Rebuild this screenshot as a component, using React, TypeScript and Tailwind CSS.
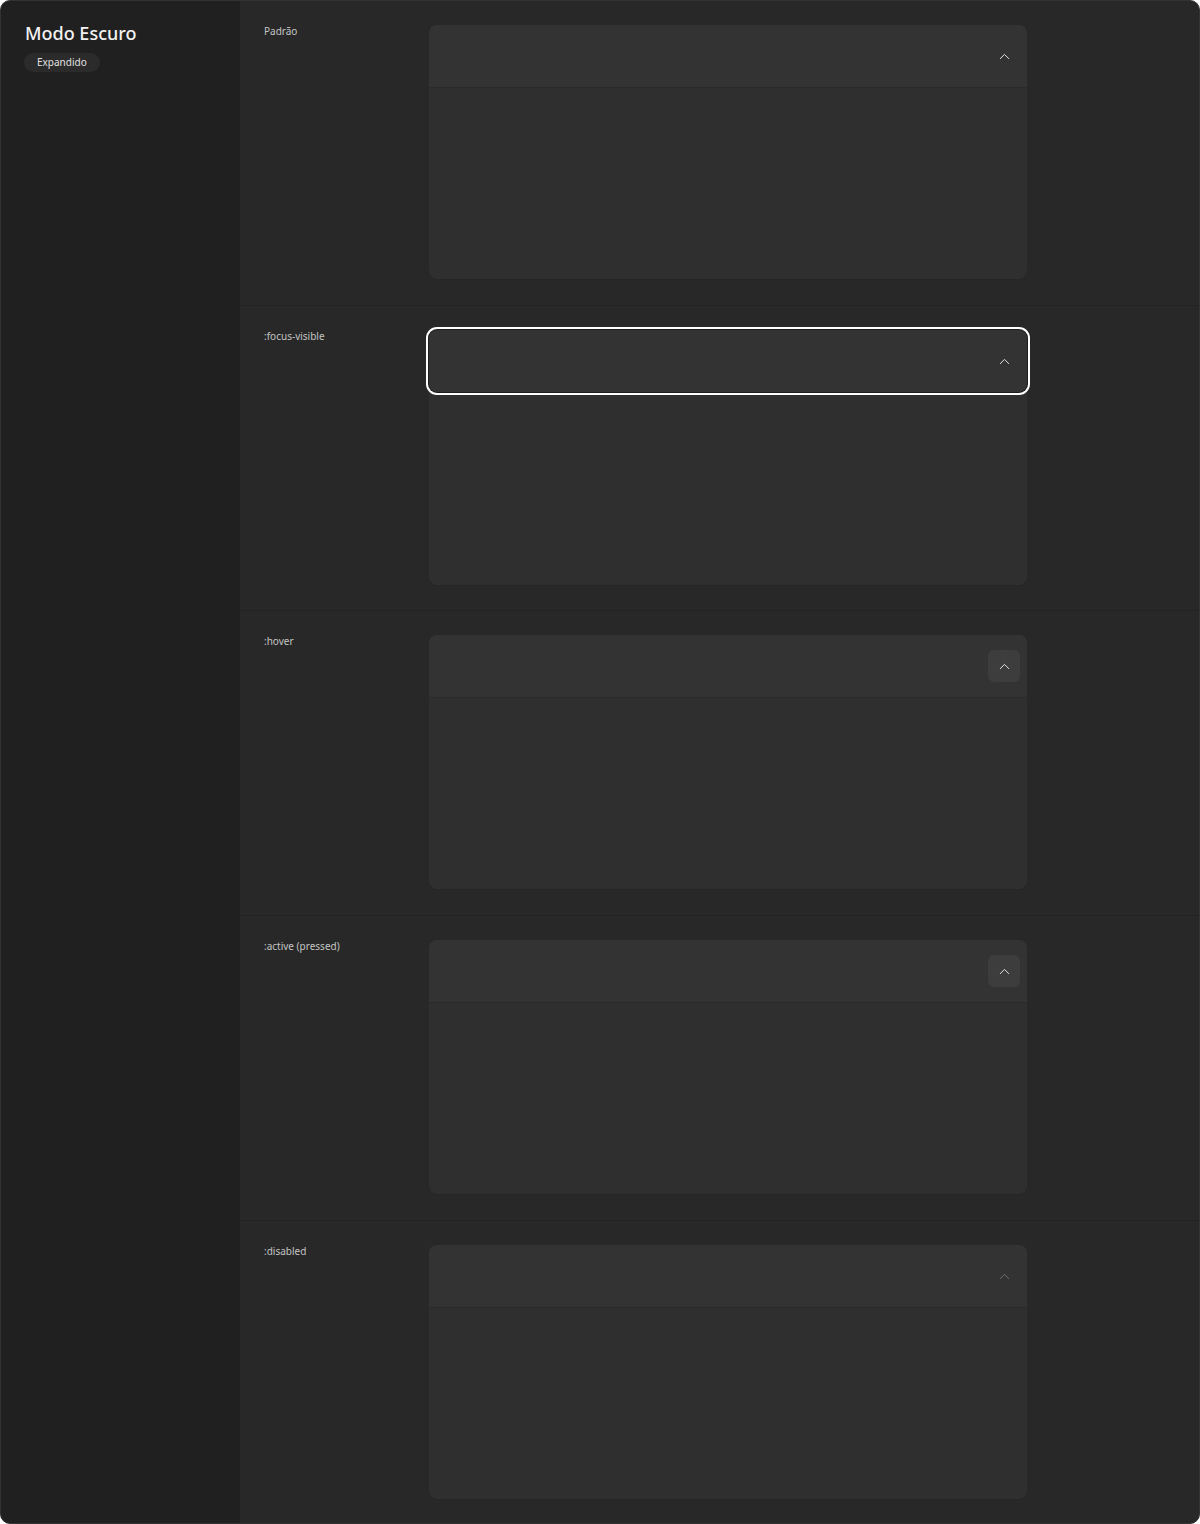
import { ChevronUp } from "lucide-react";

type State = "default" | "focus" | "hover" | "active" | "disabled";

const rows: { label: string; state: State }[] = [
  { label: "Padrão", state: "default" },
  { label: ":focus-visible", state: "focus" },
  { label: ":hover", state: "hover" },
  { label: ":active (pressed)", state: "active" },
  { label: ":disabled", state: "disabled" },
];

function Accordion({ state }: { state: State }) {
  const focus = state === "focus";
  const button = state === "hover" || state === "active";
  return (
    <div className="w-[598px] rounded-lg bg-[#2f2f2f] shadow-[0_1px_0_#262626]">
      <div
        className={`flex h-[62px] items-center justify-end rounded-t-lg bg-[#333333] pr-[7px] ${
          focus ? "rounded-b-lg shadow-[0_0_0_1px_#1c1c1c,0_0_0_3px_#ffffff]" : ""
        }`}
      >
        <div
          className={`flex h-8 w-8 items-center justify-center rounded-md ${
            button ? "bg-[#3d3d3d]" : ""
          }`}
        >
          <ChevronUp
            size={17}
            strokeWidth={1.4}
            className={state === "disabled" ? "text-[#6f6f6f]" : "text-[#e6e6e6]"}
          />
        </div>
      </div>
      <div className={`h-[192px] ${focus ? "mt-px" : "border-t border-[#2a2a2a]"}`} />
    </div>
  );
}

export default function App() {
  return (
    <div
      className="flex h-[1524px] w-[1200px] overflow-hidden rounded-[10px] border border-[#333333] bg-[#282828]"
      style={{ fontFamily: '"Noto Sans", "Open Sans", sans-serif' }}
    >
      <aside className="w-[239px] shrink-0 bg-[#202020] px-6 pt-[20px]">
        <h1 className="text-[18px] font-medium leading-[24px] text-[#f2f2f2]">Modo Escuro</h1>
        <span className="mt-[8px] ml-[-1px] inline-block rounded-full bg-[#2b2b2b] px-[13px] py-[3px] text-[10px] leading-[13px] text-[#e0e0e0]">
          Expandido
        </span>
      </aside>
      <main className="flex-1">
        {rows.map((r) => (
          <section
            key={r.label}
            className="flex h-[305px] items-start border-b border-[#222222] pt-6 pl-6"
          >
            <div className="w-[165px] shrink-0 text-[10px] leading-[13px] text-[#c4c4c4]">
              {r.label}
            </div>
            <Accordion state={r.state} />
          </section>
        ))}
      </main>
    </div>
  );
}
